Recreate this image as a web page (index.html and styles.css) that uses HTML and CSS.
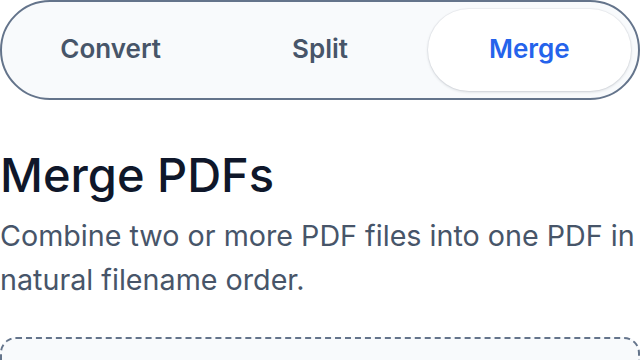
FILE: index.html
```html
<!DOCTYPE html>
<html lang="en">
<head>
<meta charset="utf-8">
<title>Merge PDFs</title>
<link rel="stylesheet" href="styles.css">
</head>
<body>
<div class="page">
  <nav class="tabs">
    <button class="tab">Convert</button>
    <button class="tab">Split</button>
    <button class="tab active">Merge</button>
  </nav>
  <h1 class="title">Merge PDFs</h1>
  <p class="lead">Combine two or more PDF files into one PDF in natural filename order.</p>
  <div class="dropzone"></div>
</div>
</body>
</html>
```

FILE: styles.css
```css
html, body {
  margin: 0;
  padding: 0;
  background: #ffffff;
}
body {
  font-family: Inter, "Noto Sans", "Liberation Sans", sans-serif;
  overflow: hidden;
}
.page {
  width: 640px;
}
.tabs {
  box-sizing: border-box;
  height: 100px;
  border: 2px solid #64748b;
  border-radius: 9999px;
  background: #f8fafc;
  padding: 7px;
  display: grid;
  grid-template-columns: 1fr 1fr 1fr;
  gap: 6px;
}
.tab {
  border: none;
  background: transparent;
  border-radius: 9999px;
  font-family: inherit;
  font-size: 26px;
  font-weight: 600;
  color: #475569;
  padding: 0 0 3px 0;
  cursor: pointer;
}
.tab.active {
  background: #ffffff;
  color: #2563eb;
  box-shadow: 0 1px 3px rgba(15, 23, 42, 0.16), 0 0 0 1px rgba(15, 23, 42, 0.04);
}
.title {
  margin: 46px 0 0 0;
  font-size: 47px;
  line-height: 58px;
  font-weight: 500;
  color: #0f172a;
}
.lead {
  margin: 10px 0 0 0;
  font-size: 28.7px;
  line-height: 44px;
  color: #475569;
}
.dropzone {
  margin-top: 35px;
  height: 200px;
  box-sizing: border-box;
  border: 2px dashed #64748b;
  border-radius: 16px;
  background: #f8fafc;
}
```
